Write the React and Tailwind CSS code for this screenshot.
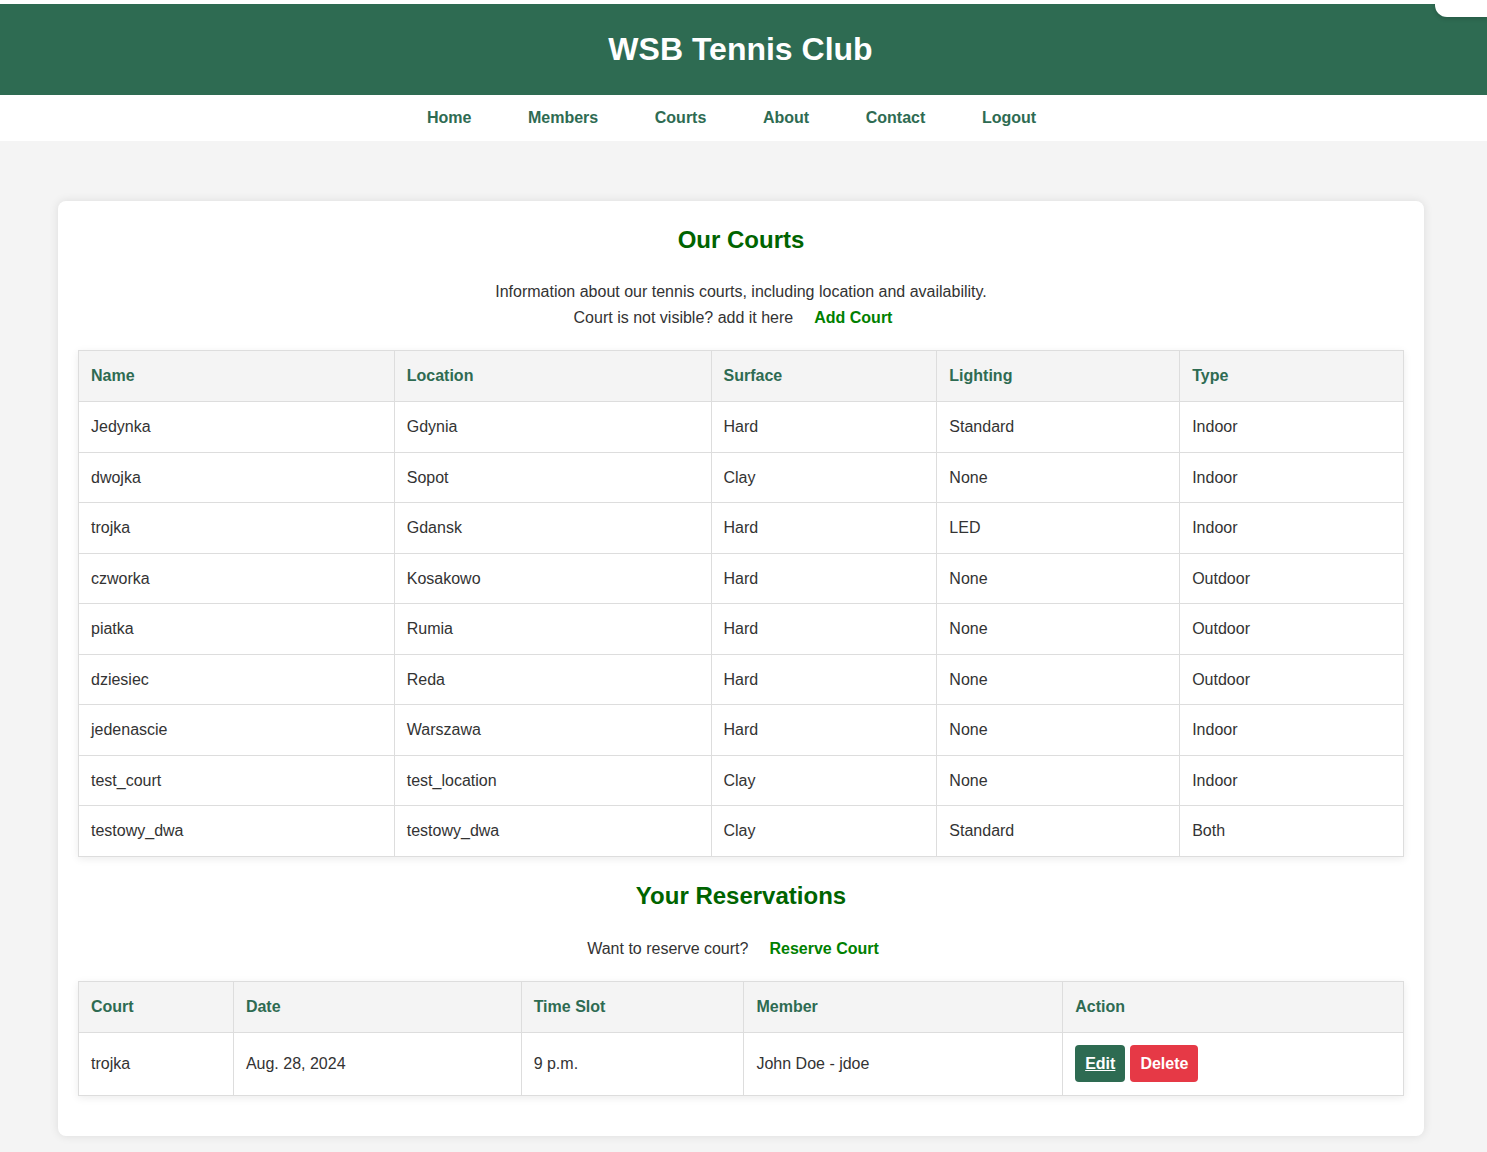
const courts = [
  ["Jedynka", "Gdynia", "Hard", "Standard", "Indoor"],
  ["dwojka", "Sopot", "Clay", "None", "Indoor"],
  ["trojka", "Gdansk", "Hard", "LED", "Indoor"],
  ["czworka", "Kosakowo", "Hard", "None", "Outdoor"],
  ["piatka", "Rumia", "Hard", "None", "Outdoor"],
  ["dziesiec", "Reda", "Hard", "None", "Outdoor"],
  ["jedenascie", "Warszawa", "Hard", "None", "Indoor"],
  ["test_court", "test_location", "Clay", "None", "Indoor"],
  ["testowy_dwa", "testowy_dwa", "Clay", "Standard", "Both"],
];

const courtCols = [
  { label: "Name", w: "w-[316px]" },
  { label: "Location", w: "w-[317px]" },
  { label: "Surface", w: "w-[226px]" },
  { label: "Lighting", w: "w-[243px]" },
  { label: "Type", w: "w-[224px]" },
];

const resCols = [
  { label: "Court", w: "w-[155px]" },
  { label: "Date", w: "w-[288px]" },
  { label: "Time Slot", w: "w-[223px]" },
  { label: "Member", w: "w-[319px]" },
  { label: "Action", w: "w-[341px]" },
];

const navItems = ["Home", "Members", "Courts", "About", "Contact", "Logout"];

const th =
  "border border-[#dddddd] bg-[#f4f4f4] px-3 py-4 text-left font-bold text-[#2e6b52] leading-[18px]";
const td = "border border-[#dddddd] px-3 py-4 text-left leading-[17.5px]";

export default function App() {
  return (
    <div className="relative min-h-[1152px] bg-[#f4f4f4] pt-1 font-['Liberation_Sans',Arial,sans-serif] text-[16px] text-[#333333]">
      {/* stray popup corner at top right */}
      <div className="absolute right-0 top-[-10px] h-[27px] w-[52px] rounded-bl-[12px] rounded-tl-[12px] bg-white shadow-[0_2px_4px_rgba(0,0,0,0.15)]" />

      <div className="absolute left-0 right-0 top-0 h-1 bg-white" />

      {/* Header */}
      <header className="flex h-[91px] items-center justify-center bg-[#2e6b52]">
        <h1 className="pb-[2px] pr-[6px] text-[32px] font-bold text-white">WSB Tennis Club</h1>
      </header>

      {/* Nav */}
      <nav className="flex h-[46px] items-center justify-center bg-white pr-[24px]">
        {navItems.map((item) => (
          <a key={item} href="#" className="px-[28.3px] font-bold text-[#2e6b52]">
            {item}
          </a>
        ))}
      </nav>

      {/* Main card */}
      <main className="pb-4 pt-[60px]">
        <div className="ml-[58px] mr-[63px] rounded-lg bg-white px-5 pb-[40px] pt-[22px] shadow-[0_0_10px_rgba(0,0,0,0.1)]">
          <h2 className="text-center text-[24px] font-bold leading-[34px] text-[#006400]">
            Our Courts
          </h2>
          <p className="mt-[22px] text-center leading-[26px]">
            Information about our tennis courts, including location and availability.
          </p>
          <p className="pr-4 text-center leading-[26px]">
            Court is not visible? add it here
            <a href="#" className="ml-[21px] font-bold text-[#008000]">
              Add Court
            </a>
          </p>

          <table className="mt-[19px] w-full border-collapse shadow-[0_2px_8px_rgba(0,0,0,0.08)]">
            <thead>
              <tr>
                {courtCols.map((c) => (
                  <th key={c.label} className={`${th} ${c.w}`}>
                    {c.label}
                  </th>
                ))}
              </tr>
            </thead>
            <tbody>
              {courts.map((row) => (
                <tr key={row[0]}>
                  {row.map((cell, i) => (
                    <td key={i} className={td}>
                      {cell}
                    </td>
                  ))}
                </tr>
              ))}
            </tbody>
          </table>

          <h2 className="mt-[22px] text-center text-[24px] font-bold leading-[34px] text-[#006400]">
            Your Reservations
          </h2>
          <p className="mt-[23px] pr-4 text-center leading-[26px]">
            Want to reserve court?
            <a href="#" className="ml-[21px] font-bold text-[#008000]">
              Reserve Court
            </a>
          </p>

          <table className="mt-[19px] w-full border-collapse shadow-[0_2px_8px_rgba(0,0,0,0.08)]">
            <thead>
              <tr>
                {resCols.map((c) => (
                  <th key={c.label} className={`${th} ${c.w}`}>
                    {c.label}
                  </th>
                ))}
              </tr>
            </thead>
            <tbody>
              <tr>
                <td className={td}>trojka</td>
                <td className={td}>Aug. 28, 2024</td>
                <td className={td}>9 p.m.</td>
                <td className={td}>John Doe - jdoe</td>
                <td className="border border-[#dddddd] px-3 pb-[13px] pt-3 text-left">
                  <div className="flex gap-[5px]">
                    <a
                      href="#"
                      className="rounded bg-[#2e6b52] px-[10px] py-[9px] font-bold leading-[19px] text-white underline"
                    >
                      Edit
                    </a>
                    <button className="rounded bg-[#e63946] px-[10px] py-[9px] font-bold leading-[19px] text-white">
                      Delete
                    </button>
                  </div>
                </td>
              </tr>
            </tbody>
          </table>
        </div>
      </main>
    </div>
  );
}
